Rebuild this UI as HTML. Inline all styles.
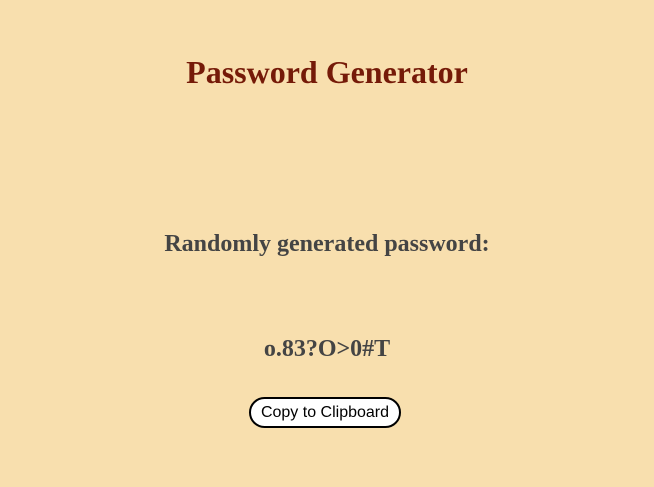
<!DOCTYPE html>
<html><head><style>
body{margin:0;width:654px;height:487px;background:#f8dfae;font-family:"Liberation Serif",serif;position:relative;overflow:hidden}
.t{position:absolute;left:0;width:654px;text-align:center;font-weight:bold}
button{position:absolute;left:249px;top:397px;width:152px;height:31px;border:2px solid #000;border-radius:16px;background:#fff;font-family:"Liberation Sans",sans-serif;font-size:16px;color:#000;padding:0}
</style></head><body>
<div class="t" style="top:52px;font-size:32px;color:#751a08;line-height:40px">Password Generator</div>
<div class="t" style="top:229px;font-size:24px;color:#444;line-height:30px">Randomly generated password:</div>
<div class="t" style="top:334px;font-size:24px;color:#444;line-height:30px">o.83?O&gt;0#T</div>
<button>Copy to Clipboard</button>
</body></html>
